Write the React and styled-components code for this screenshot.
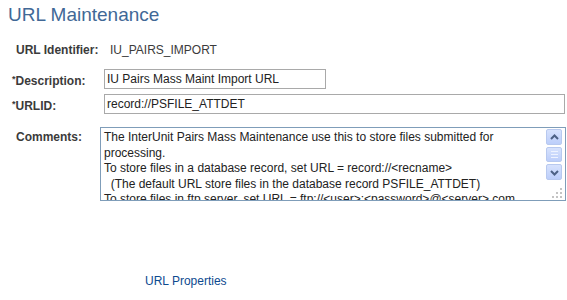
import styled, { createGlobalStyle } from 'styled-components';

const GlobalStyle = createGlobalStyle`
  body {
    margin: 0;
    background: #ffffff;
    font-family: "Liberation Sans", Arial, sans-serif;
  }
`;

const COMMENT_LINES = [
  'The InterUnit Pairs Mass Maintenance use this to store files submitted for',
  'processing.',
  'To store files in a database record, set URL = record://<recname>',
  '  (The default URL store files in the database record PSFILE_ATTDET)',
  'To store files in ftp server, set URL = ftp://<user>:<password>@<server>.com',
];

export default function App() {
  return (
    <Page>
      <GlobalStyle />
      <Title>URL Maintenance</Title>
      <Form>
        <Row mt={13}>
          <Label>URL Identifier:</Label>
          <Value>IU_PAIRS_IMPORT</Value>
        </Row>
        <Row mt={9}>
          <Label required>Description:</Label>
          <Input width={222} defaultValue="IU Pairs Mass Maint Import URL" />
        </Row>
        <Row mt={5}>
          <Label required>URLID:</Label>
          <Input width={461} defaultValue="record://PSFILE_ATTDET" />
        </Row>
        <Row mt={12} top>
          <Label offset={4}>Comments:</Label>
          <TextBox>
            <TextBody>{COMMENT_LINES.join('\n')}</TextBody>
            <ScrollBar>
              <ScrollBtn>
                <Chevron dir="up" />
              </ScrollBtn>
              <Thumb>
                <span />
                <span />
                <span />
              </Thumb>
              <ScrollBtn>
                <Chevron dir="down" />
              </ScrollBtn>
              <Grip>
                <svg width="10" height="10" viewBox="0 0 10 10">
                  <rect x="8" y="0" width="2" height="2" fill="#c4c4c4" />
                  <rect x="4" y="4" width="2" height="2" fill="#c4c4c4" />
                  <rect x="8" y="4" width="2" height="2" fill="#c4c4c4" />
                  <rect x="0" y="8" width="2" height="2" fill="#c4c4c4" />
                  <rect x="4" y="8" width="2" height="2" fill="#c4c4c4" />
                  <rect x="8" y="8" width="2" height="2" fill="#c4c4c4" />
                </svg>
              </Grip>
            </ScrollBar>
          </TextBox>
        </Row>
      </Form>
      <LinkRow>
        <Link href="#">URL Properties</Link>
      </LinkRow>
    </Page>
  );
}

function Chevron({ dir }) {
  const d = dir === 'up' ? 'M2 7 L5.5 3.5 L9 7' : 'M2 4 L5.5 7.5 L9 4';
  return (
    <svg width="11" height="11" viewBox="0 0 11 11">
      <path d={d} fill="none" stroke="#4d6185" strokeWidth="2" />
    </svg>
  );
}

const Page = styled.div`
  width: 567px;
  height: 300px;
  overflow: hidden;
`;

const Title = styled.h1`
  margin: 0;
  padding: 3px 0 0 8px;
  font-size: 19px;
  line-height: 24px;
  font-weight: normal;
  color: #416896;
`;

const Form = styled.div`
  display: flex;
  flex-direction: column;
  padding-left: 12px;
`;

const Row = styled.div`
  display: grid;
  grid-template-columns: 88px 1fr;
  align-items: ${(p) => (p.top ? 'start' : 'center')};
  margin-top: ${(p) => p.mt}px;
  min-height: 20px;
`;

const Label = styled.span`
  font-size: 12px;
  font-weight: bold;
  color: #3b3b3b;
  padding-left: ${(p) => (p.required ? '0' : '4px')};
  padding-top: ${(p) => (p.required ? 3 : p.offset || 0)}px;
  ${(p) => p.required && `
    &::before {
      content: '*';
      font-size: 9px;
      vertical-align: 3px;
    }
  `}
`;

const Value = styled.span`
  font-size: 12px;
  color: #3b3b3b;
  margin-left: 10px;
`;

const Input = styled.input`
  box-sizing: border-box;
  width: ${(p) => p.width}px;
  height: 20px;
  margin-left: 4px;
  padding: 0 2px;
  border: 1px solid #a9a9a9;
  font-family: "Liberation Sans", Arial, sans-serif;
  font-size: 12px;
  color: #222;
  background: #fff;
  outline: none;
`;

const TextBox = styled.div`
  box-sizing: border-box;
  width: 466px;
  height: 74px;
  margin-top: 1px;
  border: 1px solid #7f9db9;
  display: flex;
  background: #fff;
`;

const TextBody = styled.div`
  flex: 1;
  overflow: hidden;
  white-space: pre;
  padding: 2px 3px;
  font-size: 12px;
  line-height: 15.5px;
  color: #222;
`;

const ScrollBar = styled.div`
  width: 17px;
  padding: 1px 2px 0 0;
  display: flex;
  flex-direction: column;
  gap: 2px;
`;

const ScrollBtn = styled.div`
  box-sizing: border-box;
  width: 16px;
  height: 16px;
  border: 1px solid #b8c9ef;
  border-radius: 2px;
  background: linear-gradient(#d7e2fd, #bccefa);
  display: flex;
  align-items: center;
  justify-content: center;
`;

const Thumb = styled(ScrollBtn)`
  height: 15px;
  flex-direction: column;
  gap: 2px;
  span {
    width: 7px;
    height: 1px;
    background: #eef3ff;
  }
`;

const Grip = styled.div`
  margin-top: 6px;
  display: flex;
  justify-content: flex-end;
  padding-right: 1px;
`;

const LinkRow = styled.div`
  margin-top: 70px;
  padding-left: 145px;
`;

const Link = styled.a`
  font-size: 12px;
  color: #0d4a8f;
  text-decoration: none;
`;
